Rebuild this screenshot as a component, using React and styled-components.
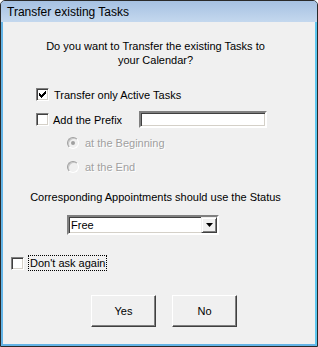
import React from "react";
import styled, { createGlobalStyle, css } from "styled-components";

const Global = createGlobalStyle`
  html, body { margin: 0; padding: 0; background: #ffffff; }
  body { font-family: "Liberation Sans", Arial, sans-serif; }
  * { box-sizing: border-box; }
`;

const Window = styled.div`
  width: 318px;
  height: 347px;
  border: 1px solid #2a2a2a;
  border-radius: 5px 5px 0 0;
  display: flex;
  flex-direction: column;
  overflow: hidden;
  background: #a9c4e4;
`;

const TitleBar = styled.div`
  height: 21px;
  flex: none;
  display: flex;
  align-items: center;
  padding-left: 6px;
  background: linear-gradient(#a6c1e2, #c4d8ee);
  font-family: "Liberation Sans", Arial, sans-serif;
  font-size: 12px;
  color: #000;
`;

const Client = styled.div`
  flex: 1;
  border: 2px solid #64b4e6;
  border-top: none;
  border-right-color: #5dc6ef;
  background: #f0f0f0;
  font-family: "Liberation Sans", Arial, sans-serif;
  font-size: 11px;
  color: #000;
  display: flex;
  flex-direction: column;
`;

const Question = styled.div`
  margin: 17px 7px 0 0;
  text-align: center;
  line-height: 14px;
`;

const Row = styled.div`
  display: flex;
  align-items: center;
  height: ${(p) => p.$h || 17}px;
  margin-top: ${(p) => p.$mt}px;
  padding-left: ${(p) => p.$indent}px;
`;

const sunken = css`
  border-style: solid;
  border-width: 2px;
  border-color: #808080 #ffffff #ffffff #808080;
  box-shadow: inset 1px 1px 0 #404040, inset -1px -1px 0 #d4d0c8;
`;

const Box = styled.span`
  width: 13px;
  height: 13px;
  flex: none;
  background: #fff;
  border: 1px solid;
  border-color: #808080 #ffffff #ffffff #808080;
  box-shadow: inset 1px 1px 0 #404040, inset -1px -1px 0 #d4d0c8;
  display: flex;
  align-items: center;
  justify-content: center;
`;

const Label = styled.span`
  margin-left: ${(p) => p.$gap ?? 5}px;
  white-space: nowrap;
  line-height: 14px;
  ${(p) =>
    p.$disabled &&
    css`
      color: #a0a0a0;
      text-shadow: 1px 1px 0 #ffffff;
    `}
  ${(p) =>
    p.$focus &&
    css`
      outline: 1px dotted #000;
      outline-offset: 0;
      padding: 0 1px;
    `}
`;

const TextInput = styled.span`
  display: block;
  width: 128px;
  height: 17px;
  margin-left: 17px;
  background: #fff;
  ${sunken};
`;

const Radio = styled.span`
  width: 12px;
  height: 12px;
  flex: none;
  border-radius: 50%;
  background: #f0f0f0;
  border: 1px solid;
  border-color: #a0a0a0 #ffffff #ffffff #a0a0a0;
  box-shadow: inset 1px 1px 0 #c8c8c8;
  display: flex;
  align-items: center;
  justify-content: center;
  &::after {
    content: "";
    display: ${(p) => (p.$checked ? "block" : "none")};
    width: 4px;
    height: 4px;
    border-radius: 50%;
    background: #a0a0a0;
  }
`;

const Caption = styled.div`
  margin: 15px 7px 0 0;
  text-align: center;
  line-height: 14px;
`;

const Select = styled.div`
  width: 152px;
  height: 20px;
  margin: 11px 0 0 64px;
  background: #fff;
  ${sunken};
  display: flex;
  align-items: center;
`;

const SelectText = styled.span`
  flex: 1;
  padding-left: 2px;
  line-height: 14px;
`;

const ArrowButton = styled.span`
  width: 16px;
  height: 16px;
  flex: none;
  background: #f0f0f0;
  border: 1px solid;
  border-color: #f0f0f0 #404040 #404040 #f0f0f0;
  box-shadow: inset 1px 1px 0 #ffffff, inset -1px -1px 0 #808080;
  display: flex;
  align-items: center;
  justify-content: center;
`;

const Buttons = styled.div`
  display: flex;
  gap: 16px;
  margin: 25px 0 0 88px;
`;

const Button = styled.button`
  width: 65px;
  height: 32px;
  padding: 0;
  background: #f0f0f0;
  border: 1px solid;
  border-color: #ffffff #404040 #404040 #ffffff;
  box-shadow: inset -1px -1px 0 #808080, inset 1px 1px 0 #f0f0f0;
  font-family: "Liberation Sans", Arial, sans-serif;
  font-size: 11px;
  color: #000;
`;

const Check = () => (
  <svg width="7" height="7" viewBox="0 0 7 7">
    <path d="M0 2h1v1h1v1h1V3h1V2h1V1h1V0h1v3H6v1H5v1H4v1H3v1H2V6H1V5H0z" fill="#000" />
  </svg>
);

const Arrow = () => (
  <svg width="7" height="4" viewBox="0 0 7 4">
    <path d="M0 0h7L3.5 4z" fill="#000" />
  </svg>
);

export default function App() {
  return (
    <>
      <Global />
      <Window>
        <TitleBar>Transfer existing Tasks</TitleBar>
        <Client>
          <Question>
            Do you want to Transfer the existing Tasks to
            <br />
            your Calendar?
          </Question>
          <Row $mt={19} $indent={33}>
            <Box>
              <Check />
            </Box>
            <Label>Transfer only Active Tasks</Label>
          </Row>
          <Row $mt={8} $indent={33}>
            <Box />
            <Label $gap={4}>Add the Prefix</Label>
            <TextInput />
          </Row>
          <Row $mt={7} $h={16} $indent={64}>
            <Radio $checked />
            <Label $gap={6} $disabled>at the Beginning</Label>
          </Row>
          <Row $mt={8} $h={16} $indent={64}>
            <Radio />
            <Label $gap={6} $disabled>at the End</Label>
          </Row>
          <Caption>Corresponding Appointments should use the Status</Caption>
          <Select>
            <SelectText>Free</SelectText>
            <ArrowButton>
              <Arrow />
            </ArrowButton>
          </Select>
          <Row $mt={21} $h={14} $indent={8}>
            <Box />
            <Label $gap={5} $focus>
              Don't ask again
            </Label>
          </Row>
          <Buttons>
            <Button>Yes</Button>
            <Button>No</Button>
          </Buttons>
        </Client>
      </Window>
    </>
  );
}
